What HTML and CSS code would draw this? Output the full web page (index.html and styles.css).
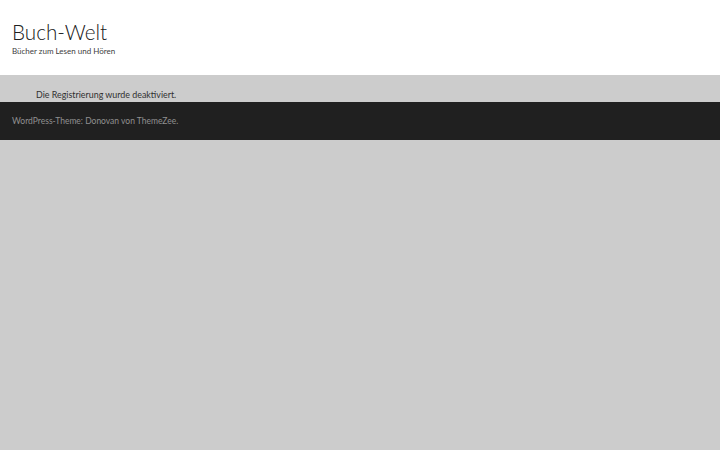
FILE: index.html
```html
<!DOCTYPE html>
<html lang="de">
<head>
<meta charset="utf-8">
<title>Buch-Welt</title>
<link rel="stylesheet" href="styles.css">
</head>
<body>
<header class="site-header">
  <div class="site-title">Buch-Welt</div>
  <div class="site-description">Bücher zum Lesen und Hören</div>
</header>
<main class="site-content">
  <p class="message">Die Registrierung wurde deaktiviert.</p>
</main>
<footer class="site-footer">
  <span class="credit">WordPress-Theme: Donovan von ThemeZee.</span>
</footer>
</body>
</html>
```
FILE: styles.css
```css
html, body {
  margin: 0;
  padding: 0;
}
body {
  background: #cccccc;
  font-family: "Lato", "Open Sans", sans-serif;
  color: #202020;
}
.site-header {
  background: #ffffff;
  height: 75px;
  box-sizing: border-box;
  padding: 19px 12px 0;
}
.site-title {
  font-size: 20.7px;
  font-weight: 300;
  line-height: 26px;
  color: #202020;
}
.site-description {
  margin-top: 0;
  font-size: 8px;
  line-height: 12px;
  color: #404040;
}
.site-content {
  height: 27px;
  box-sizing: border-box;
  padding: 14px 36px 0;
}
.message {
  margin: 0;
  font-size: 8.9px;
  line-height: 12px;
  font-weight: 400;
  color: #303030;
}
.site-footer {
  background: #202020;
  height: 38px;
  box-sizing: border-box;
  padding: 13px 12px 0;
  font-size: 8.5px;
  line-height: 12px;
  color: #909090;
}
```
